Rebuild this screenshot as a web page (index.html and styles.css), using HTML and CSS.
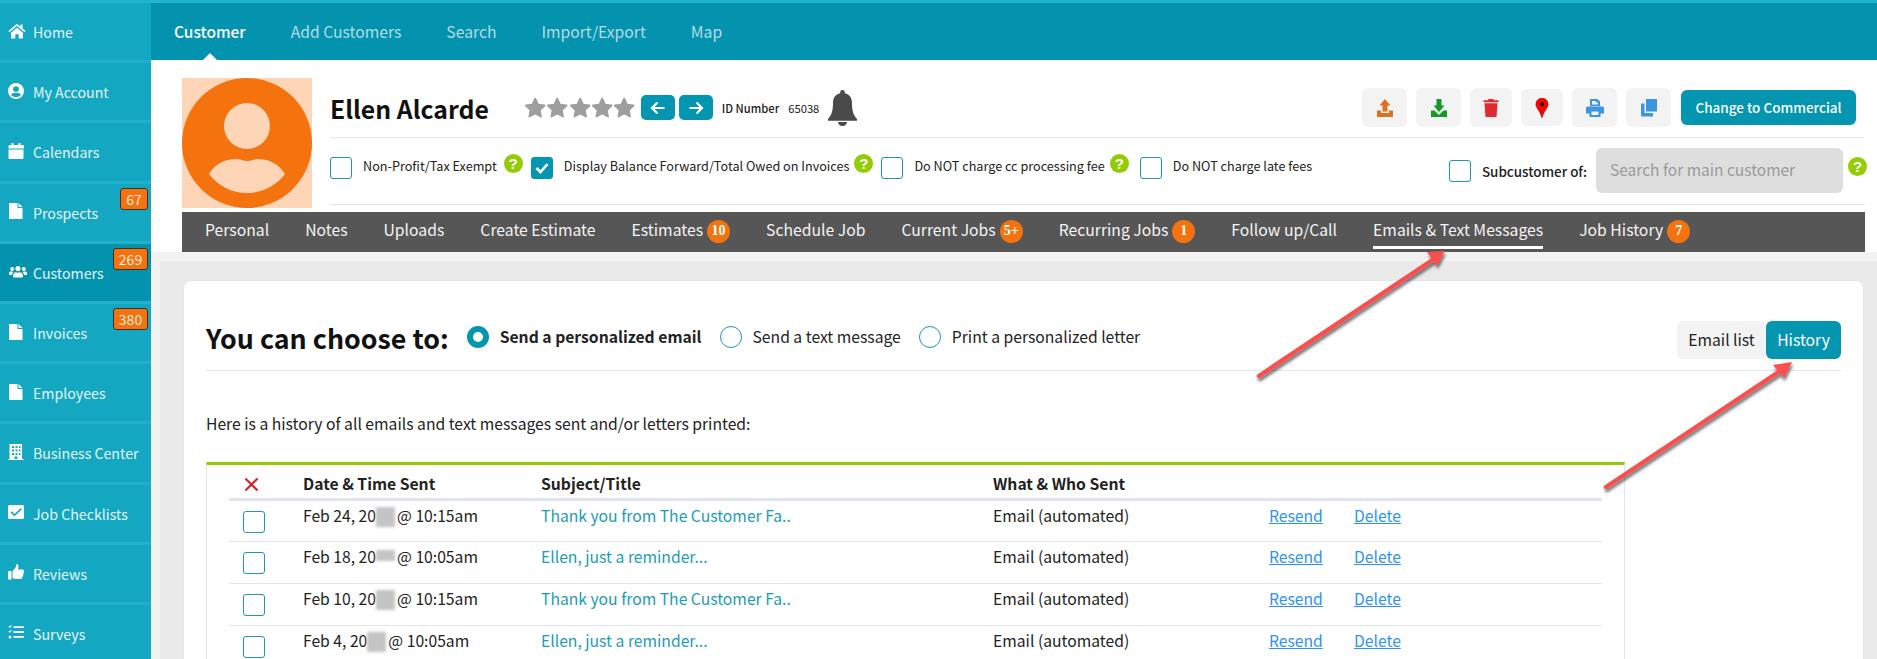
FILE: index.html
```html
<!DOCTYPE html>
<html lang="en">
<head>
<meta charset="utf-8">
<title>Customer - Ellen Alcarde</title>
<link rel="stylesheet" href="styles.css">
</head>
<body>
<div class="strip"></div>
<div class="app">
  <nav class="side">
    <a class="side-item"><svg class="si si-home" viewBox="0 0 18 16"><path d="M9 .8.4 8l1.100 1.200L9 3l7.500 6.200L17.600 8l-3-2.500V1.500h-2.200v2.200zM3 9.800 9 4.800l6 5V15.500h-4.300v-4.300H7.300v4.300H3z"/></svg><span>Home</span></a>
    <a class="side-item"><svg class="si" viewBox="0 0 16 16"><path fill-rule="evenodd" d="M8 0a8 8 0 1 0 0 16A8 8 0 0 0 8 0zm0 3.200a2.900 2.900 0 1 1 0 5.800 2.900 2.900 0 0 1 0-5.800zM3.200 12c.5-1.500 1.600-2.300 2.800-2.300.6.200 1.300.4 2 .4s1.400-.2 2-.4c1.200 0 2.300.8 2.800 2.300-1.100 1.300-2.900 2.200-4.800 2.200S4.300 13.300 3.200 12z"/></svg><span>My Account</span></a>
    <a class="side-item"><svg class="si" viewBox="0 0 16 16"><path d="M3.500 0h2v2h5V0h2v2H15a1 1 0 0 1 1 1v2.500H.5V3a1 1 0 0 1 1-1h2zM.5 6.500H15.500V15a1 1 0 0 1-1 1h-13a1 1 0 0 1-1-1z"/></svg><span>Calendars</span></a>
    <a class="side-item"><svg class="si" viewBox="0 0 16 16"><path d="M1 0h8.500v5H14.500V16H1zM10.500 0l4 4h-4z"/></svg><span>Prospects</span><b class="badge badge-sm">67</b></a>
    <a class="side-item side-active"><svg class="si si-wide" viewBox="0 0 18 16"><path d="M9 3a2.600 2.600 0 1 1 0 5.200A2.600 2.600 0 0 1 9 3zM3.200 4a2 2 0 1 1 0 4 2 2 0 0 1 0-4zM14.800 4a2 2 0 1 1 0 4 2 2 0 0 1 0-4zM0 9.500C.3 8.700 1 8.500 3 8.500c.6 0 1.100.3 1.500.6C3.600 9.800 3.200 10.800 3 12H0zM18 9.500c-.3-.8-1-1-3-1-.6 0-1.100.3-1.500.6.9.7 1.300 1.700 1.500 2.900h3zM4 13.400c0-2.400 1.200-4.200 2.800-4.200.7.3 1.400.5 2.200.5s1.500-.2 2.200-.5c1.600 0 2.800 1.800 2.800 4.200 0 .7-.5 1.100-1.200 1.100H5.200c-.7 0-1.200-.4-1.200-1.100z"/></svg><span>Customers</span><b class="badge">269</b></a>
    <a class="side-item"><svg class="si" viewBox="0 0 16 16"><path d="M1 0h8.500v5H14.500V16H1zM10.500 0l4 4h-4z"/></svg><span>Invoices</span><b class="badge">380</b></a>
    <a class="side-item"><svg class="si" viewBox="0 0 16 16"><path d="M1 0h8.500v5H14.500V16H1zM10.500 0l4 4h-4z"/></svg><span>Employees</span></a>
    <a class="side-item"><svg class="si" viewBox="0 0 16 16"><path fill-rule="evenodd" d="M1.500 0H14v15h1.500v1H.5v-1h1zM4 2v2h2V2zm3.500 0v2h2V2zM11 2v2h1.500V2zM4 5.500v2h2v-2zm3.500 0v2h2v-2zm3.500 0v2h1.500v-2zM4 9v2h2V9zm3.500 0v2h2V9zM11 9v2h1.500V9zM6.500 12.500V15h3v-2.500z"/></svg><span>Business Center</span></a>
    <a class="side-item"><svg class="si" viewBox="0 0 16 16"><path fill-rule="evenodd" d="M1.500 1h13A1.500 1.500 0 0 1 16 2.500v11a1.500 1.500 0 0 1-1.500 1.500h-13A1.500 1.500 0 0 1 0 13.500v-11A1.500 1.500 0 0 1 1.500 1zm11.300 3.200L6.500 10 3.700 7.300 2.500 8.500l4 3.800 7.500-7z"/></svg><span>Job Checklists</span></a>
    <a class="side-item"><svg class="si" viewBox="0 0 16 16"><path d="M0 7h3.500v8.500H0zM4.500 7.500 7.500 3.500c.5-1 .7-2 .9-3.500 1.300 0 2.100 1 2.100 2.500 0 1-.3 2-.7 3h4.700c.9 0 1.500.7 1.500 1.500 0 .6-.3 1.100-.7 1.400.3.3.5.7.5 1.100 0 .6-.4 1.100-.9 1.400.1.200.2.500.2.800 0 .6-.4 1.100-.9 1.300.1.200.1.400.1.600 0 1-.8 1.400-1.800 1.400H8c-1.400 0-2.300-.5-3.500-1z"/></svg><span>Reviews</span></a>
    <a class="side-item"><svg class="si" viewBox="0 0 16 16"><path d="M5.500 2.200H16v1.800H5.500zM5.500 7.100H16v1.800H5.500zM5.500 12H16v1.800H5.500zM.4 2.500l.8-.7.7.7L3.300.9l.7.7L1.900 3.900zM.4 7.400l.8-.7.7.7 1.400-1.600.7.7-2.100 2.300zM2 11.400a1.500 1.500 0 1 1 0 3 1.500 1.500 0 0 1 0-3z"/></svg><span>Surveys</span></a>
  </nav>
  <div class="main">
    <div class="topnav">
      <a class="tn tn-on">Customer</a>
      <a class="tn">Add Customers</a>
      <a class="tn">Search</a>
      <a class="tn">Import/Export</a>
      <a class="tn">Map</a>
    </div>
    <header class="hdr">
      <svg class="avatar" viewBox="0 0 130 130">
        <rect width="130" height="130" fill="#fed5b7"/>
        <circle cx="65" cy="65" r="65" fill="#f5730f"/>
        <circle cx="65" cy="48" r="23" fill="#fed5b7"/>
        <path d="M27 96C34 84 46 81 54 81c4 0 8 2 11 2s7-2 11-2c8 0 20 3 27 15-9 12-23 19-38 19S36 108 27 96z" fill="#fed5b7"/>
      </svg>
      <div class="hdr-body">
        <div class="hdr-top">
          <h1 class="name">Ellen Alcarde</h1>
          <div class="stars">
            <svg viewBox="0 0 24 24"><path d="m12 2.500 3 6.500 7 .9-5.100 4.800 1.300 7L12 18.300l-6.200 3.400 1.300-7L2 9.900l7-.9z"/></svg>
            <svg viewBox="0 0 24 24"><path d="m12 2.500 3 6.500 7 .9-5.100 4.800 1.300 7L12 18.300l-6.200 3.400 1.300-7L2 9.900l7-.9z"/></svg>
            <svg viewBox="0 0 24 24"><path d="m12 2.500 3 6.500 7 .9-5.100 4.800 1.300 7L12 18.300l-6.200 3.400 1.300-7L2 9.900l7-.9z"/></svg>
            <svg viewBox="0 0 24 24"><path d="m12 2.500 3 6.500 7 .9-5.100 4.800 1.300 7L12 18.300l-6.200 3.400 1.300-7L2 9.900l7-.9z"/></svg>
            <svg viewBox="0 0 24 24"><path d="m12 2.500 3 6.500 7 .9-5.100 4.800 1.300 7L12 18.300l-6.200 3.400 1.300-7L2 9.900l7-.9z"/></svg>
          </div>
          <a class="pager"><svg viewBox="0 0 16 14"><path d="M14.500 7h-12M7.500 1.500 2 7l5.500 5.500" fill="none" stroke="#fff" stroke-width="2.200"/></svg></a>
          <a class="pager"><svg viewBox="0 0 16 14"><path d="M1.500 7h12M8.500 1.500 14 7l-5.500 5.500" fill="none" stroke="#fff" stroke-width="2.200"/></svg></a>
          <span class="idlabel">ID Number</span>
          <span class="idnum">65038</span>
          <svg class="bell" viewBox="0 0 29 36"><path d="M14.500 0c1.400 0 2.300.9 2.300 2.200v1.100C21.500 4.300 24 8 24 13c0 7.500 1.500 12.500 5 16v1.800H0V29c3.500-3.500 5-8.500 5-16 0-5 2.500-8.700 7.200-9.700V2.200C12.200.9 13.100 0 14.500 0zM10 32h9c0 2.300-2 4-4.500 4S10 34.300 10 32z" fill="#4a4a4a"/></svg>
          <div class="actions">
            <a class="ib ib-wide"><svg viewBox="0 0 18 20"><path d="M9 1 14.500 7.500H11.500V13.500H6.500V7.500H3.500zM1 12.500h4v2.500h8v-2.500h4V19H1z" fill="#dd7122"/></svg></a>
            <a class="ib ib-wide"><svg viewBox="0 0 18 20"><path d="M6.500 1h5v6.500h3L9 14 3.500 7.500h3zM1 12.500h3.500L9 17l4.500-4.500H17V19H1z" fill="#149926"/></svg></a>
            <a class="ib ib-mid"><svg viewBox="0 0 16 20"><path d="M5.500 1h5l.5 1.300h4.500v1.900H.5V2.300H5zM1.500 5.200h13L13.500 19h-11z" fill="#e02a2f"/></svg></a>
            <a class="ib ib-pin"><svg viewBox="0 0 14 22"><path d="M7 0a6.800 6.800 0 0 1 6.800 6.800C13.800 11 9.500 13.500 7 22 4.500 13.500.2 11 .2 6.800A6.800 6.800 0 0 1 7 0z" fill="#f00" stroke="#5a0000" stroke-width=".4"/><circle cx="7" cy="7" r="2.200" fill="#111"/></svg></a>
            <a class="ib ib-wide"><svg viewBox="0 0 18 20"><path fill-rule="evenodd" d="M4 1h7.500L14 3.500V8H4zM1.500 8.500h15A1.500 1.500 0 0 1 18 10v5.500h-3.500V19h-11v-3.500H0V10a1.500 1.500 0 0 1 1.500-1.500zM5.500 13.500V17h7v-3.500zM6 3v3.500h6V4.500h-2V3z" fill="#3b96e0"/></svg></a>
            <a class="ib ib-wide"><svg viewBox="0 0 18 20"><path d="M6 1h11v12.500H6z" fill="#3b96e0"/><path d="M1 5.500h3.500V15H13v3.500H2.500A1.500 1.500 0 0 1 1 17z" fill="#3b96e0"/></svg></a>
            <a class="cta">Change to Commercial</a>
          </div>
        </div>
        <div class="hdr-opts">
          <span class="cb"></span><span class="opt-label">Non-Profit/Tax Exempt</span><span class="help">?</span>
          <span class="cb cb-on cb-gap"><svg viewBox="0 0 14 12"><path d="m1.500 6 4 4 7-8" fill="none" stroke="#fff" stroke-width="2.600"/></svg></span><span class="opt-label">Display Balance Forward/Total Owed on Invoices</span><span class="help help-tight">?</span>
          <span class="cb cb-gap"></span><span class="opt-label">Do NOT charge cc processing fee</span><span class="help help-tight">?</span>
          <span class="cb cb-gap cb-gap-w"></span><span class="opt-label">Do NOT charge late fees</span>
          <div class="sub">
            <span class="cb"></span>
            <span class="sub-label">Subcustomer of:</span>
            <input class="sub-input" type="text" placeholder="Search for main customer">
            <span class="help">?</span>
          </div>
        </div>
      </div>
    </header>
    <div class="tabs">
      <a class="tab">Personal</a>
      <a class="tab">Notes</a>
      <a class="tab">Uploads</a>
      <a class="tab">Create Estimate</a>
      <a class="tab">Estimates<b class="pill">10</b></a>
      <a class="tab">Schedule Job</a>
      <a class="tab">Current Jobs<b class="pill">5+</b></a>
      <a class="tab">Recurring Jobs<b class="pill">1</b></a>
      <a class="tab">Follow up/Call</a>
      <a class="tab tab-on">Emails &amp; Text Messages</a>
      <a class="tab">Job History<b class="pill">7</b></a>
    </div>
    <div class="outer">
      <div class="panel">
        <section class="card">
          <div class="choose">
            <h2 class="choose-title">You can choose to:</h2>
            <span class="radio radio-on"></span><span class="radio-label radio-bold">Send a personalized email</span>
            <span class="radio"></span><span class="radio-label">Send a text message</span>
            <span class="radio"></span><span class="radio-label">Print a personalized letter</span>
            <div class="seg">
              <a class="seg-btn">Email list</a>
              <a class="seg-btn seg-on">History</a>
            </div>
          </div>
          <p class="intro">Here is a history of all emails and text messages sent and/or letters printed:</p>
          <div class="tbl-wrap">
            <table class="tbl">
              <colgroup><col class="c1"><col class="c2"><col class="c3"><col class="c4"><col class="c5"><col></colgroup>
              <thead>
                <tr>
                  <th><svg class="x" viewBox="0 0 16 16"><path d="m1.500 1.500 13 13M14.500 1.500l-13 13" stroke="#d9202a" stroke-width="2.200" fill="none"/></svg></th>
                  <th>Date &amp; Time Sent</th><th>Subject/Title</th><th>What &amp; Who Sent</th><th></th><th></th>
                </tr>
              </thead>
              <tbody>
                <tr><td class="ck"><span class="cb"></span></td><td>Feb 24, 20<i class="blur"></i>@ 10:15am</td><td><a class="subj">Thank you from The Customer Fa..</a></td><td>Email (automated)</td><td><a class="lnk">Resend</a></td><td><a class="lnk">Delete</a></td></tr>
                <tr><td class="ck"><span class="cb"></span></td><td>Feb 18, 20<i class="blur blur-short"></i>@ 10:05am</td><td><a class="subj">Ellen, just a reminder...</a></td><td>Email (automated)</td><td><a class="lnk">Resend</a></td><td><a class="lnk">Delete</a></td></tr>
                <tr><td class="ck"><span class="cb"></span></td><td>Feb 10, 20<i class="blur"></i>@ 10:15am</td><td><a class="subj">Thank you from The Customer Fa..</a></td><td>Email (automated)</td><td><a class="lnk">Resend</a></td><td><a class="lnk">Delete</a></td></tr>
                <tr><td class="ck"><span class="cb"></span></td><td>Feb 4, 20<i class="blur"></i>@ 10:05am</td><td><a class="subj">Ellen, just a reminder...</a></td><td>Email (automated)</td><td><a class="lnk">Resend</a></td><td><a class="lnk">Delete</a></td></tr>
              </tbody>
            </table>
          </div>
        </section>
      </div>
    </div>
  </div>
</div>
<svg class="arrows" viewBox="0 0 1877 659">
  <defs><filter id="ds" x="-10%" y="-10%" width="125%" height="125%"><feDropShadow dx="1" dy="3" stdDeviation="1.600" flood-color="#000" flood-opacity=".55"/></filter></defs>
  <g filter="url(#ds)" fill="#f9504f">
    <path d="M1259 376 1434 259" stroke="#f9504f" stroke-width="4.500" stroke-linecap="round"/>
    <path d="m1445 251-8 15-10-14z"/>
    <path d="M1606 487 1783 369" stroke="#f9504f" stroke-width="4.500" stroke-linecap="round"/>
    <path d="m1792 362-8 16-11-13z"/>
  </g>
</svg>
</body>
</html>
```
FILE: styles.css
```css
* { box-sizing: border-box; }
html, body { margin: 0; height: 659px; overflow: hidden; background: #fff; }
body {
  font-family: "Noto Sans CJK SC", "Noto Sans", sans-serif;
  font-size: 15.700px;
  color: #222;
  position: relative;
}
.strip { height: 3px; background: #1fb4d2; }
.app { display: flex; height: 656px; }

/* sidebar */
.side { width: 151px; flex: none; background: #14a7c2; }
.side-item {
  height: 60.200px;
  display: flex;
  align-items: center;
  padding: 1px 0 0 8px;
  color: #e4f5f9;
  font-size: 14.200px;
  line-height: 20px;
  white-space: nowrap;
  border-bottom: 3px solid #20b2cc;
  position: relative;
}
.side-active { background: #0393ae; }
.si { width: 16px; height: 16px; margin: -3px 9px 0 0; fill: #fff; flex: none; }
.si-home { width: 18px; margin-right: 7px; }
.si-wide { width: 20px; margin-right: 5px; }
.badge {
  position: absolute;
  top: 4px;
  right: 3px;
  height: 22px;
  width: 35px;
  background: #f4730f;
  border: 1px solid #41302a;
  border-radius: 3px;
  color: #ffe8d8;
  font-size: 14px;
  font-weight: 400;
  line-height: 20px;
  text-align: center;
}
.badge-sm { width: 28px; }

/* top nav */
.main { flex: 1; min-width: 0; display: flex; flex-direction: column; }
.topnav { height: 57px; flex: none; background: #0393ae; display: flex; }
.tn {
  padding: 0 22.500px;
  line-height: 58px;
  font-size: 15.700px;
  color: #b4dce5;
  position: relative;
}
.tn-on { color: #fff; font-weight: 500; font-size: 15.500px; line-height: 56px; padding-left: 23px; }
.tn-on::after {
  content: "";
  position: absolute;
  left: 50%;
  bottom: 0;
  margin-left: -7px;
  border: 7px solid transparent;
  border-top: 0;
  border-bottom-color: #fff;
}

/* header */
.hdr { display: flex; gap: 18px; padding: 18px 12px 0 31px; height: 152px; flex: none; }
.avatar { width: 130px; height: 130px; flex: none; }
.hdr-body { flex: 1; min-width: 0; }
.hdr-top {
  height: 60px;
  display: flex;
  align-items: center;
  border-bottom: 1px solid #e3e4ef;
  padding: 0 9px 0 0;
}
.name { margin: 0 35px 0 0; font-size: 24.800px; line-height: 36px; font-weight: 600; color: #111; white-space: nowrap; }
.stars { display: flex; width: 112px; margin-right: 5px; }
.stars svg {
  width: 22.400px;
  height: 23px;
  fill: #9e9e9e;
  stroke: #9e9e9e;
  stroke-width: 2;
  stroke-linejoin: round;
  flex: none;
}
.pager {
  width: 34px;
  height: 25px;
  margin-right: 4px;
  background: #0496b0;
  border-radius: 5px;
  display: flex;
  align-items: center;
  justify-content: center;
  flex: none;
}
.pager svg { width: 16px; height: 14px; }
.idlabel { font-size: 11.200px; margin-left: 5px; color: #222; font-weight: 500; }
.idnum { font-size: 11.200px; margin-left: 9px; color: #222; }
.bell { width: 29px; height: 36px; margin-left: 9px; flex: none; }
.actions { margin-left: auto; display: flex; align-items: center; gap: 9px; }
.ib {
  height: 39px;
  background: #f3f3f3;
  border-radius: 6px;
  display: flex;
  align-items: center;
  justify-content: center;
  flex: none;
}
.ib-wide { width: 45px; }
.ib-mid { width: 42px; }
.ib-pin { width: 42px; height: 37px; }
.ib svg { width: 18px; height: 20px; }
.cta {
  height: 35px;
  width: 175px;
  margin-left: 1px;
  background: #0496b0;
  border-radius: 6px;
  color: #fff;
  font-size: 13.500px;
  font-weight: 500;
  line-height: 34px;
  text-align: center;
}
.hdr-opts {
  height: 67px;
  border-bottom: 1px solid #e3e4ef;
  display: flex;
  align-items: flex-start;
  padding-top: 16px;
}
.cb {
  display: inline-flex;
  align-items: center;
  justify-content: center;
  width: 22px;
  height: 22px;
  flex: none;
  margin-top: 3px;
  background: #fff;
  border: 1.500px solid #1f97ae;
  border-radius: 3px;
}
.cb svg { width: 14px; height: 12px; }
.cb-on { background: #0496b0; border-color: #0496b0; }
.cb-gap { margin-left: 8px; }
.cb-gap-w { margin-left: 11px; }
.opt-label { font-size: 12.650px; line-height: 22px; margin: 1px 0 0 11px; white-space: nowrap; color: #222; }
.help {
  width: 19px;
  height: 19px;
  margin-left: 7px;
  border-radius: 50%;
  background: #93cb05;
  color: #fff;
  font-family: "Liberation Sans", sans-serif;
  font-size: 15px;
  font-weight: 700;
  line-height: 19px;
  text-align: center;
  flex: none;
}
.help-tight { margin-left: 5px; }
.sub { margin-left: auto; margin-right: -2px; display: flex; align-items: center; margin-top: -6px; }
.sub .cb { margin-top: 0; }
.sub-label { margin: 0 9px 0 11px; font-size: 13.400px; font-weight: 500; line-height: 22px; white-space: nowrap; }
.sub-input {
  width: 247px;
  height: 45px;
  background: #dedede;
  border: 0;
  border-radius: 6px;
  padding: 0 14px 3px;
  font: 15.500px "Noto Sans CJK SC", sans-serif;
}
.sub-input::placeholder { color: #9a9a9a; opacity: 1; }
.sub .help { margin: -8px 0 0 5px; }

/* tabs */
.tabs {
  height: 40px;
  flex: none;
  margin: 0 12px 0 31px;
  padding: 0 5px;
  background: #565656;
  display: flex;
}
.tab {
  margin: 0 18px;
  color: #f4f4f4;
  font-size: 15.740px;
  line-height: 35px;
  white-space: nowrap;
  height: 37px;
}
.tab-on { border-bottom: 3px solid #fff; }
.pill {
  display: inline-block;
  width: 23px;
  height: 23px;
  margin-left: 4px;
  border-radius: 50%;
  background: #f5730f;
  color: #fff;
  font-family: "Liberation Serif", serif;
  font-size: 14px;
  font-weight: 700;
  line-height: 22px;
  text-align: center;
  vertical-align: 1px;
}

/* panel */
.outer { flex: 1; background: #f2f2f3; padding: 9px 0 0 9px; min-height: 0; }
.panel { height: 100%; background: #eaeaea; padding: 19px 13px 0 23px; }
.card {
  height: 100%;
  background: #fff;
  border: 1px solid #e4e6f0;
  border-bottom: 0;
  border-radius: 8px 8px 0 0;
  padding: 40px 22px 0 22px;
}
.choose { display: flex; align-items: flex-start; height: 50px; border-bottom: 1px solid #e3e4ef; }
.choose-title { margin: -1px 18px 0 0; font-size: 26.800px; line-height: 36px; font-weight: 600; color: #111; white-space: nowrap; }
.radio { width: 22px; height: 22px; flex: none; margin: 5px 11px 0 0; border: 1.500px solid #1f97ae; border-radius: 50%; background: #fff; }
.radio-on { border: 6px solid #0496b0; }
.radio-label { line-height: 22px; margin: 5px 18px 0 0; white-space: nowrap; }
.radio-bold { font-weight: 600; color: #222; }
.seg { margin-left: auto; display: flex; }
.seg-btn { height: 38px; line-height: 37px; background: #f3f3f3; border-radius: 6px; color: #222; width: 89px; text-align: center; white-space: nowrap; }
.seg-on { background: #0496b0; color: #fff; width: 75px; }
.intro { margin: 41px 0 26px; line-height: 24px; color: #222; }
.tbl-wrap { border-top: 3px solid #93cb05; border-left: 1px solid #e4e6f0; border-right: 1px solid #e4e6f0; width: 1419px; padding: 0 22px; }
.tbl { width: 100%; border-collapse: collapse; table-layout: fixed; }
.c1 { width: 74px; }
.c2 { width: 238px; }
.c3 { width: 452px; }
.c4 { width: 276px; }
.c5 { width: 85px; }
.tbl th { text-align: left; font-weight: 600; height: 34px; padding: 6px 0 0; line-height: 24px; border-bottom: 3px solid #e2e5f0; }
.x { width: 15px; height: 15px; display: block; margin-left: 15px; }
.tbl td { height: 42px; padding: 4px 0 0; vertical-align: top; line-height: 22px; border-bottom: 1px solid #e3e4ef; white-space: nowrap; }
.tbl td.ck { padding: 7px 0 0 14px; }
.ck .cb { margin: 3px 0 0; }
.blur {
  display: inline-block;
  width: 19px;
  height: 20px;
  margin-right: 2px;
  background: #c4c4c4;
  filter: blur(1.500px);
  vertical-align: -5px;
}
.blur-short { height: 11px; vertical-align: 2px; }
.subj { color: #1d9cb5; }
.lnk { color: #2f93f0; text-decoration: underline; }

/* annotation arrows */
.arrows { position: absolute; left: 0; top: 0; width: 1877px; height: 659px; pointer-events: none; }
```
